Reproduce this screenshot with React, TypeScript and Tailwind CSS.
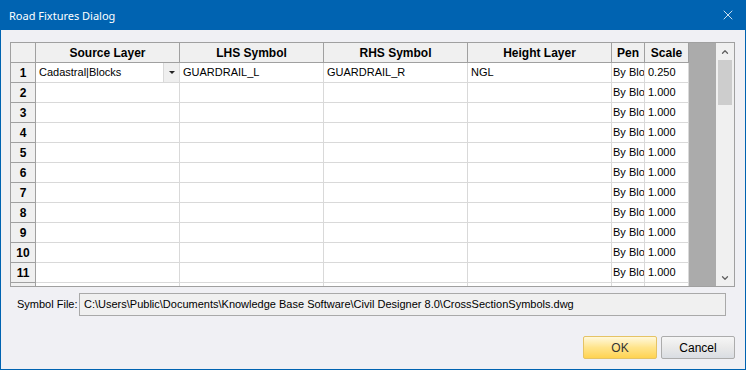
import { X, ChevronUp, ChevronDown } from 'lucide-react';

const cols = [
  { name: 'Source Layer', w: 'w-[144px]' },
  { name: 'LHS Symbol', w: 'w-[144px]' },
  { name: 'RHS Symbol', w: 'w-[144px]' },
  { name: 'Height Layer', w: 'w-[144px]' },
  { name: 'Pen', w: 'w-[33px]' },
  { name: 'Scale', w: 'w-[44px]' },
];

const rows = [1, 2, 3, 4, 5, 6, 7, 8, 9, 10, 11, 12];

const App = () => {
  return (
    <div className="w-[746px] h-[370px] flex flex-col bg-[#0063b1] overflow-hidden" style={{ fontFamily: '"Liberation Sans", Arial, sans-serif' }}>
      {/* Title bar */}
      <div className="h-[30px] flex items-center justify-between pl-[9px] pr-[10px] text-white">
        <span className="text-[11px] leading-none" style={{ fontFamily: '"Noto Sans", sans-serif' }}>Road Fixtures Dialog</span>
        <X className="w-[16px] h-[16px]" strokeWidth={1.2} />
      </div>

      {/* Body */}
      <div className="flex-1 mx-px mb-px bg-[#f0f0f4] pt-[12px] pl-[9px] flex flex-col">
        {/* Grid */}
        <div className="w-[725px] h-[245px] border border-[#a0a0a0] flex overflow-hidden bg-[#ababab]">
          <div className="flex flex-col w-[678px] shrink-0">
            {/* Header */}
            <div className="flex h-[20px] shrink-0 bg-[#f0f0f0]">
              <div className="w-[25px] shrink-0 border-r border-b border-[#a0a0a0]" />
              {cols.map((c) => (
                <div key={c.name} className={`${c.w} shrink-0 border-r border-b border-[#a0a0a0] flex items-center justify-center text-[12px] font-bold text-black`}>
                  {c.name}
                </div>
              ))}
            </div>
            {rows.map((r) => (
              <div key={r} className="flex h-[20px] shrink-0 bg-white text-[11px] text-black">
                <div className="w-[25px] shrink-0 border-r border-b border-[#a0a0a0] bg-[#f0f0f0] flex items-center justify-center font-bold text-[12px]">
                  {r}
                </div>
                <div className="w-[144px] shrink-0 border-r border-b border-[#d9d9d9] flex items-center">
                  {r === 1 && (
                    <>
                      <span className="flex-1 pl-[3px] whitespace-nowrap">Cadastral|Blocks</span>
                      <div className="w-[16px] h-[19px] bg-[#efefef] border-l border-[#d9d9d9] flex items-center justify-center">
                        <div className="w-0 h-0 border-l-[3px] border-r-[3px] border-t-[3px] border-l-transparent border-r-transparent border-t-[#222]" />
                      </div>
                    </>
                  )}
                </div>
                <div className="w-[144px] shrink-0 border-r border-b border-[#d9d9d9] flex items-center pl-[3px] whitespace-nowrap">
                  {r === 1 ? 'GUARDRAIL_L' : ''}
                </div>
                <div className="w-[144px] shrink-0 border-r border-b border-[#d9d9d9] flex items-center pl-[3px] whitespace-nowrap">
                  {r === 1 ? 'GUARDRAIL_R' : ''}
                </div>
                <div className="w-[144px] shrink-0 border-r border-b border-[#d9d9d9] flex items-center pl-[3px] whitespace-nowrap">
                  {r === 1 ? 'NGL' : ''}
                </div>
                <div className="w-[33px] shrink-0 border-r border-b border-[#d9d9d9] flex items-center pl-[1px] whitespace-nowrap overflow-hidden">
                  By Blo
                </div>
                <div className="w-[44px] shrink-0 border-r border-b border-[#d9d9d9] flex items-center pl-[3px] whitespace-nowrap">
                  {r === 1 ? '0.250' : '1.000'}
                </div>
              </div>
            ))}
          </div>
          <div className="w-[27px] shrink-0" />
          {/* Scrollbar */}
          <div className="w-[18px] shrink-0 bg-[#f0f0f0] flex flex-col">
            <div className="h-[17px] flex items-center justify-center text-[#606060]">
              <ChevronUp className="w-[10px] h-[10px]" strokeWidth={3} />
            </div>
            <div className="flex-1 px-[2px]">
              <div className="h-[45px] bg-[#cdcdcd]" />
            </div>
            <div className="h-[17px] flex items-center justify-center text-[#606060]">
              <ChevronDown className="w-[10px] h-[10px]" strokeWidth={3} />
            </div>
          </div>
        </div>

        {/* Symbol file */}
        <div className="flex items-center mt-[6px] h-[23px]">
          <span className="w-[69px] pl-[7px] text-[11px] text-black whitespace-nowrap">Symbol File:</span>
          <div className="w-[647px] h-[23px] border border-[#a9a9a9] bg-[#f0f0f0] flex items-center pl-[4px] text-[11px] text-black whitespace-nowrap overflow-hidden">
            C:\Users\Public\Documents\Knowledge Base Software\Civil Designer 8.0\CrossSectionSymbols.dwg
          </div>
        </div>

        {/* Buttons */}
        <div className="flex justify-end gap-[4px] mt-[20px] pr-[10px]">
          <button className="w-[74px] h-[23px] rounded-[2px] border border-[#e5c365] bg-gradient-to-b from-[#fff8db] via-[#ffe48a] to-[#ffd34f] text-[12px] text-[#333]">
            OK
          </button>
          <button className="w-[74px] h-[23px] rounded-[2px] border border-[#acacac] bg-gradient-to-b from-[#f6f6f6] via-[#e9e9e9] to-[#d9dde3] text-[12px] text-black">
            Cancel
          </button>
        </div>
      </div>
    </div>
  );
};

export default App;
